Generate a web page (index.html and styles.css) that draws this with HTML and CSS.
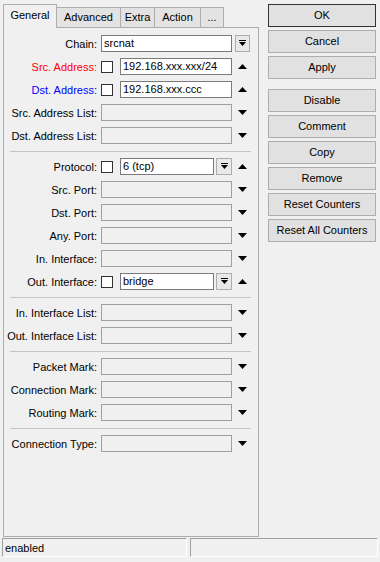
FILE: index.html
```html
<!DOCTYPE html>
<html>

<head>
	<title>NAT Rule</title>
	<link rel="stylesheet" href="styles.css">
</head>

<body>
	<div class="window">
		<div class="main">

			<div class="editor">
				<div class="tabs">
					<div class="tab active tab_general">General</div>
					<div class="tab tab_advanced">Advanced</div>
					<div class="tab tab_extra">Extra</div>
					<div class="tab tab_action">Action</div>
					<div class="tab tab_more">...</div>
				</div>

				<div class="panel">
					<div class="row">
						<div class="label">Chain:</div>
						<div class="field"><div class="input filled wide">srcnat</div></div>
						<div class="side"><div class="combo"><svg width="7" height="7" viewBox="0 0 7 7"><rect width="7" height="1"/><path d="M0 2h7l-3.5 4z"/></svg></div></div>
					</div>
					<div class="row">
						<div class="label red">Src. Address:</div>
						<div class="field"><div class="check"></div><div class="input filled">192.168.xxx.xxx/24</div></div>
						<div class="side"><svg class="arrow" width="9" height="5" viewBox="0 0 9 5"><path d="M0 5h9L4.5 0z"/></svg></div>
					</div>
					<div class="row">
						<div class="label blue">Dst. Address:</div>
						<div class="field"><div class="check"></div><div class="input filled">192.168.xxx.ccc</div></div>
						<div class="side"><svg class="arrow" width="9" height="5" viewBox="0 0 9 5"><path d="M0 5h9L4.5 0z"/></svg></div>
					</div>
					<div class="row">
						<div class="label">Src. Address List:</div>
						<div class="field"><div class="input wide"></div></div>
						<div class="side"><svg class="arrow" width="9" height="5" viewBox="0 0 9 5"><path d="M0 0h9L4.5 5z"/></svg></div>
					</div>
					<div class="row">
						<div class="label">Dst. Address List:</div>
						<div class="field"><div class="input wide"></div></div>
						<div class="side"><svg class="arrow" width="9" height="5" viewBox="0 0 9 5"><path d="M0 0h9L4.5 5z"/></svg></div>
					</div>

					<div class="sep"></div>

					<div class="row">
						<div class="label">Protocol:</div>
						<div class="field"><div class="check"></div><div class="input filled">6 (tcp)</div><div class="combo"><svg width="7" height="7" viewBox="0 0 7 7"><rect width="7" height="1"/><path d="M0 2h7l-3.5 4z"/></svg></div></div>
						<div class="side"><svg class="arrow" width="9" height="5" viewBox="0 0 9 5"><path d="M0 5h9L4.5 0z"/></svg></div>
					</div>
					<div class="row">
						<div class="label">Src. Port:</div>
						<div class="field"><div class="input wide"></div></div>
						<div class="side"><svg class="arrow" width="9" height="5" viewBox="0 0 9 5"><path d="M0 0h9L4.5 5z"/></svg></div>
					</div>
					<div class="row">
						<div class="label">Dst. Port:</div>
						<div class="field"><div class="input wide"></div></div>
						<div class="side"><svg class="arrow" width="9" height="5" viewBox="0 0 9 5"><path d="M0 0h9L4.5 5z"/></svg></div>
					</div>
					<div class="row">
						<div class="label">Any. Port:</div>
						<div class="field"><div class="input wide"></div></div>
						<div class="side"><svg class="arrow" width="9" height="5" viewBox="0 0 9 5"><path d="M0 0h9L4.5 5z"/></svg></div>
					</div>
					<div class="row">
						<div class="label">In. Interface:</div>
						<div class="field"><div class="input wide"></div></div>
						<div class="side"><svg class="arrow" width="9" height="5" viewBox="0 0 9 5"><path d="M0 0h9L4.5 5z"/></svg></div>
					</div>
					<div class="row">
						<div class="label">Out. Interface:</div>
						<div class="field"><div class="check"></div><div class="input filled">bridge</div><div class="combo"><svg width="7" height="7" viewBox="0 0 7 7"><rect width="7" height="1"/><path d="M0 2h7l-3.5 4z"/></svg></div></div>
						<div class="side"><svg class="arrow" width="9" height="5" viewBox="0 0 9 5"><path d="M0 5h9L4.5 0z"/></svg></div>
					</div>

					<div class="sep"></div>

					<div class="row">
						<div class="label">In. Interface List:</div>
						<div class="field"><div class="input wide"></div></div>
						<div class="side"><svg class="arrow" width="9" height="5" viewBox="0 0 9 5"><path d="M0 0h9L4.5 5z"/></svg></div>
					</div>
					<div class="row">
						<div class="label">Out. Interface List:</div>
						<div class="field"><div class="input wide"></div></div>
						<div class="side"><svg class="arrow" width="9" height="5" viewBox="0 0 9 5"><path d="M0 0h9L4.5 5z"/></svg></div>
					</div>

					<div class="sep"></div>

					<div class="row">
						<div class="label">Packet Mark:</div>
						<div class="field"><div class="input wide"></div></div>
						<div class="side"><svg class="arrow" width="9" height="5" viewBox="0 0 9 5"><path d="M0 0h9L4.5 5z"/></svg></div>
					</div>
					<div class="row">
						<div class="label">Connection Mark:</div>
						<div class="field"><div class="input wide"></div></div>
						<div class="side"><svg class="arrow" width="9" height="5" viewBox="0 0 9 5"><path d="M0 0h9L4.5 5z"/></svg></div>
					</div>
					<div class="row">
						<div class="label">Routing Mark:</div>
						<div class="field"><div class="input wide"></div></div>
						<div class="side"><svg class="arrow" width="9" height="5" viewBox="0 0 9 5"><path d="M0 0h9L4.5 5z"/></svg></div>
					</div>

					<div class="sep"></div>

					<div class="row">
						<div class="label">Connection Type:</div>
						<div class="field"><div class="input wide"></div></div>
						<div class="side"><svg class="arrow" width="9" height="5" viewBox="0 0 9 5"><path d="M0 0h9L4.5 5z"/></svg></div>
					</div>
				</div>
			</div>

			<div class="buttons">
				<div class="button default">OK</div>
				<div class="button">Cancel</div>
				<div class="button">Apply</div>
				<div class="button group_start">Disable</div>
				<div class="button">Comment</div>
				<div class="button">Copy</div>
				<div class="button">Remove</div>
				<div class="button">Reset Counters</div>
				<div class="button">Reset All Counters</div>
			</div>

		</div>

		<div class="statusbar">
			<div class="status status_left">enabled</div>
			<div class="status status_right"></div>
		</div>
	</div>
</body>
</html>
```

FILE: styles.css
```css
body {
	margin: 0;
	background: #f0f0f0;
	font-family: "Liberation Sans", Arial, sans-serif;
	font-size: 11px;
	color: #000;
}
.window {
	height: 562px;
	box-sizing: border-box;
	padding: 4px 4px 5px 3px;
	display: flex;
	flex-direction: column;
}
.main {
	flex: 1;
	display: flex;
	gap: 9px;
	min-height: 0;
}
.editor {
	width: 256px;
	display: flex;
	flex-direction: column;
}
.tabs {
	height: 23px;
	display: flex;
	align-items: flex-end;
	position: relative;
	z-index: 1;
}
.tab {
	box-sizing: border-box;
	height: 20px;
	line-height: 19px;
	text-align: center;
	background: #e3e3e3;
	border: 1px solid #adadad;
	border-bottom: none;
	margin-left: -1px;
}
.tab.active {
	height: 24px;
	line-height: 21px;
	margin-left: 0;
	margin-bottom: -1px;
	background: #f0f0f0;
	position: relative;
	z-index: 2;
}
.tab_general { width: 54px; }
.tab_advanced { width: 65px; }
.tab_extra { width: 35px; }
.tab_action { width: 47px; }
.tab_more { width: 24px; }
.panel {
	flex: 1;
	box-sizing: border-box;
	border: 1px solid #adadad;
	padding-top: 4px;
}
.row {
	height: 23px;
	display: grid;
	grid-template-columns: 94px 131px 15px;
	column-gap: 3px;
	align-items: center;
}
.label {
	text-align: right;
	padding-right: 1px;
	white-space: nowrap;
}
.red { color: #ff0000; }
.blue { color: #0000ff; }
.field {
	display: flex;
	align-items: center;
	height: 17px;
}
.input {
	flex: 1;
	box-sizing: border-box;
	height: 17px;
	line-height: 15px;
	padding-left: 2px;
	border: 1px solid #a0a0a0;
	background: #f0f0f0;
	white-space: nowrap;
	overflow: hidden;
}
.input.filled {
	background: #fff;
	border-color: #7a7a7a;
}
.check {
	box-sizing: border-box;
	width: 12px;
	height: 12px;
	margin-right: 7px;
	border: 1px solid #333;
	background: #fff;
}
.combo {
	box-sizing: border-box;
	width: 16px;
	height: 17px;
	border: 1px solid #adadad;
	background: #e9e9e9;
	display: flex;
	align-items: center;
	justify-content: center;
}
.field .combo {
	margin-left: 2px;
}
.side {
	display: flex;
	align-items: center;
	justify-content: center;
}
.side .combo {
	width: 15px;
}
.sep {
	height: 0;
	margin: 4px 7px 3px 6px;
	border-top: 1px solid #c4c4c4;
}
.buttons {
	width: 108px;
	display: flex;
	flex-direction: column;
	gap: 3px;
}
.button {
	box-sizing: border-box;
	height: 23px;
	line-height: 21px;
	text-align: center;
	background: #e1e1e1;
	border: 1px solid #adadad;
	white-space: nowrap;
}
.button.default {
	border-color: #333;
}
.group_start {
	margin-top: 7px;
}
.statusbar {
	height: 19px;
	display: flex;
	gap: 3px;
	margin: 1px -2px 0 -1px;
}
.status {
	box-sizing: border-box;
	height: 19px;
	line-height: 18px;
	padding-left: 2px;
	border: 1px solid #fff;
	border-top-color: #a0a0a0;
	border-left-color: #a0a0a0;
}
.status_left {
	width: 185px;
}
.status_right {
	flex: 1;
}
```
